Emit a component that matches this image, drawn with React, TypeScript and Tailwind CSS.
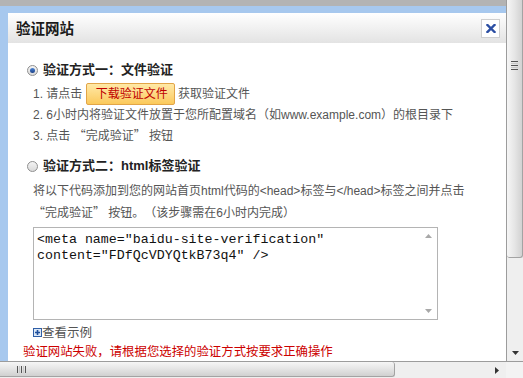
import React from "react";

function Radio({ checked }: { checked: boolean }) {
  return (
    <span className="relative inline-flex items-center justify-center w-[11px] h-[11px] rounded-full border border-[#8f8f8f] bg-linear-to-b from-[#f4f4f4] to-[#dadada] shrink-0">
      {checked && (
        <span className="w-[5px] h-[5px] rounded-full bg-linear-to-b from-[#4d86d6] to-[#1b3f86]" />
      )}
    </span>
  );
}

function Q({ children }: { children: React.ReactNode }) {
  return <span className="font-['Noto_Sans_CJK_SC',sans-serif]">{children}</span>;
}

export default function App() {
  return (
    <div className="w-[523px] h-[378px] flex flex-col bg-white overflow-hidden font-['Liberation_Sans','Noto_Sans_CJK_SC',sans-serif]">
      <div className="flex h-[361px] shrink-0">
        {/* viewport */}
        <div className="w-[506px] h-full overflow-hidden flex flex-col bg-[#b3b3b3]">
          <div className="h-[6px] shrink-0" />
          <div className="flex-1 flex flex-col border-t-[7px] border-l-[8px] border-solid border-[#a7c8ee] bg-white">
            {/* title bar */}
            <div className="h-[30px] shrink-0 flex items-center justify-between pl-[8px] pr-[6px] bg-linear-to-b from-white to-[#e3e3e3]">
              <span className="text-[14.5px] leading-[18px] font-bold text-[#1a1a1a] font-['Noto_Sans_CJK_SC',sans-serif]">验证网站</span>
              <span className="w-[19px] h-[19px] border border-[#cfcfcf] bg-white flex items-center justify-center">
                <svg width="10" height="9" viewBox="0 0 10 9">
                  <path d="M1.5 1 L8.5 8 M8.5 1 L1.5 8" stroke="#2b4ea3" strokeWidth="2.4" strokeLinecap="square" />
                </svg>
              </span>
            </div>
            {/* content */}
            <div className="flex flex-col pt-[18px] text-[12px] text-[#555]">
              <div className="flex items-center h-[18px] pl-[19px] gap-[5px]">
                <Radio checked />
                <span className="text-[13px] font-bold text-[#222] leading-[18px]">验证方式一：文件验证</span>
              </div>
              <div className="flex items-center h-[22px] mt-[4px] pl-[25px] whitespace-pre">
                <span>1. 请点击 </span>
                <span className="inline-flex items-center h-[22px] pl-[9px] pr-[6px] border border-[#e2a548] rounded-[2px] bg-linear-to-b from-[#ffe9a6] to-[#fbc95a] text-[#c00000] text-[12px]">下载验证文件</span>
                <span> 获取验证文件</span>
              </div>
              <div className="h-[20px] leading-[20px] pl-[25px] whitespace-pre">2. 6小时内将验证文件放置于您所配置域名（如www.example.com）的根目录下</div>
              <div className="h-[20px] leading-[20px] pl-[25px] whitespace-pre">3. 点击 <Q>“完成验证”</Q> 按钮</div>

              <div className="flex items-center h-[18px] mt-[12px] pl-[19px] gap-[5px]">
                <Radio checked={false} />
                <span className="text-[13px] font-bold text-[#222] leading-[18px]">验证方式二：html标签验证</span>
              </div>
              <div className="mt-[7px] pl-[25px] leading-[19.5px] text-[#555] whitespace-pre">
                将以下代码添加到您的网站首页html代码的&lt;head&gt;标签与&lt;/head&gt;标签之间并点击
                <br />
                <Q>“完成验证”</Q> 按钮<span className="inline-block w-[12px] text-left font-['Noto_Sans_CJK_SC',sans-serif]">。</span><span className="inline-block w-[12px] text-right font-['Noto_Sans_CJK_SC',sans-serif]">（</span>该步骤需在6小时内完成<Q>）</Q>
              </div>
              <div className="ml-[25px] mt-[4px] w-[405px] h-[93px] border border-[#b4b4b4] flex bg-white">
                <div className="flex-1 pl-[3px] pt-[4px] font-['Liberation_Mono',monospace] text-[13.3px] leading-[15.5px] text-[#111] whitespace-pre">
                  {'<meta name="baidu-site-verification"\ncontent="FDfQcVDYQtkB73q4" />'}
                </div>
                <div className="w-[17px] flex flex-col items-center justify-between py-[6px]">
                  <svg width="7" height="4" viewBox="0 0 7 4"><path d="M0 4 L3.5 0 L7 4 Z" fill="#a8a8a8" /></svg>
                  <svg width="7" height="4" viewBox="0 0 7 4"><path d="M0 0 L3.5 4 L7 0 Z" fill="#a8a8a8" /></svg>
                </div>
              </div>
              <div className="flex items-center h-[16px] mt-[4px] pl-[25px] gap-[0px]">
                <span className="w-[9px] h-[9px] border border-[#2f5ea6] bg-[#dce8f7] flex items-center justify-center">
                  <svg width="7" height="7" viewBox="0 0 7 7"><path d="M3.5 1 V6 M1 3.5 H6" stroke="#1f4f9c" strokeWidth="1.6" /></svg>
                </span>
                <span className="text-[12.5px] text-[#555] leading-[16px] font-['Noto_Sans_CJK_SC',sans-serif]">查看示例</span>
              </div>
              <div className="h-[16px] mt-[3px] pl-[15px] text-[12.4px] leading-[16px] text-[#cc0000] font-['Noto_Sans_CJK_SC',sans-serif]">
                验证网站失败，请根据您选择的验证方式按要求正确操作
              </div>
            </div>
          </div>
        </div>
        {/* vertical scrollbar */}
        <div className="w-[17px] h-full flex flex-col bg-[#efefef] border-l border-[#9c9c9c]">
          <div className="h-[258px] shrink-0 rounded-b-[3px] border-r border-b border-[#a3a3a3] bg-linear-to-r from-[#f6f6f6] via-[#e6e6e6] to-[#d2d2d2] flex flex-col items-center pt-[61px] gap-[1px]">
            <span className="w-[7px] h-[1px] bg-[#555]" />
            <span className="w-[7px] h-[1px] bg-[#c8c8c8]" />
            <span className="w-[7px] h-[1px] bg-[#555]" />
            <span className="w-[7px] h-[1px] bg-[#c8c8c8]" />
            <span className="w-[7px] h-[1px] bg-[#555]" />
          </div>
          <div className="flex-1 flex flex-col justify-end items-center pb-[6px]">
            <svg width="7" height="4" viewBox="0 0 7 4"><path d="M0 0 L3.5 4 L7 0 Z" fill="#333" /></svg>
          </div>
        </div>
      </div>
      {/* horizontal scrollbar */}
      <div className="flex h-[17px] shrink-0 border-t border-[#9c9c9c] bg-[#efefef]">
        <div className="w-[506px] flex items-stretch">
          <div className="w-[395px] h-[15px] rounded-r-[3px] border-r border-b border-[#a3a3a3] bg-linear-to-b from-[#f6f6f6] via-[#e4e4e4] to-[#d0d0d0] flex items-center pl-[17px] gap-[1px]">
            <span className="w-[1px] h-[7px] bg-[#555]" />
            <span className="w-[1px] h-[7px] bg-[#c8c8c8]" />
            <span className="w-[1px] h-[7px] bg-[#555]" />
            <span className="w-[1px] h-[7px] bg-[#c8c8c8]" />
            <span className="w-[1px] h-[7px] bg-[#555]" />
          </div>
          <div className="flex-1 flex items-center justify-end pr-[7px]">
            <svg width="4" height="7" viewBox="0 0 4 7"><path d="M0 0 L4 3.5 L0 7 Z" fill="#333" /></svg>
          </div>
        </div>
        <div className="w-[17px] bg-[#f3f3f3]" />
      </div>
    </div>
  );
}
